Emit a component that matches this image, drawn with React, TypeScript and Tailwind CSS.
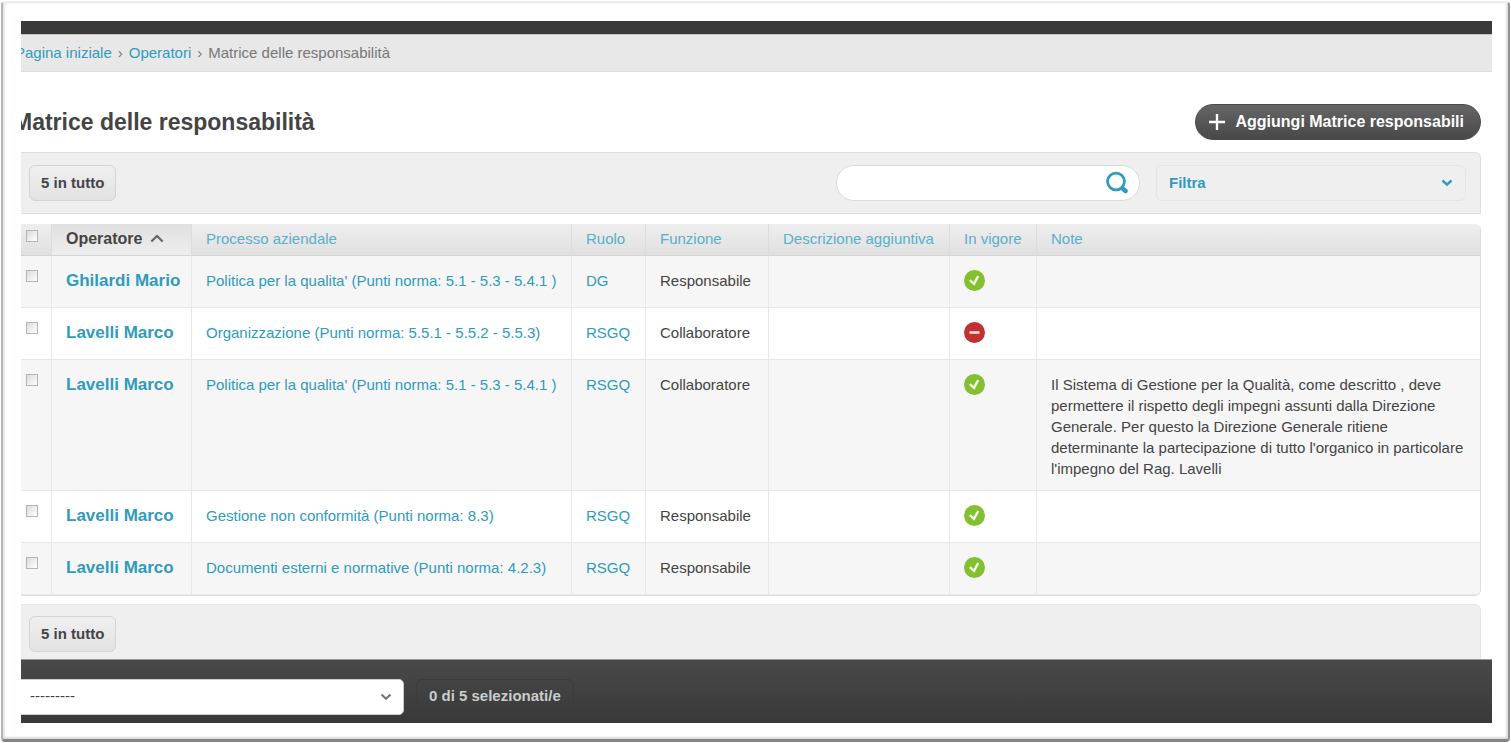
import { clsx } from "clsx";

type Row = {
  operator: string;
  process: string;
  role: string;
  job: string;
  active: boolean;
  note?: string;
};

const rows: Row[] = [
  {
    operator: "Ghilardi Mario",
    process: "Politica per la qualita' (Punti norma: 5.1 - 5.3 - 5.4.1 )",
    role: "DG",
    job: "Responsabile",
    active: true,
  },
  {
    operator: "Lavelli Marco",
    process: "Organizzazione (Punti norma: 5.5.1 - 5.5.2 - 5.5.3)",
    role: "RSGQ",
    job: "Collaboratore",
    active: false,
  },
  {
    operator: "Lavelli Marco",
    process: "Politica per la qualita' (Punti norma: 5.1 - 5.3 - 5.4.1 )",
    role: "RSGQ",
    job: "Collaboratore",
    active: true,
    note: "Il Sistema di Gestione per la Qualità, come descritto , deve permettere il rispetto degli impegni assunti dalla Direzione Generale. Per questo la Direzione Generale ritiene determinante la partecipazione di tutto l'organico in particolare l'impegno del Rag. Lavelli",
  },
  {
    operator: "Lavelli Marco",
    process: "Gestione non conformità (Punti norma: 8.3)",
    role: "RSGQ",
    job: "Responsabile",
    active: true,
  },
  {
    operator: "Lavelli Marco",
    process: "Documenti esterni e normative (Punti norma: 4.2.3)",
    role: "RSGQ",
    job: "Responsabile",
    active: true,
  },
];

const columns = [
  "Processo aziendale",
  "Ruolo",
  "Funzione",
  "Descrizione aggiuntiva",
  "In vigore",
  "Note",
];

const StatusIcon = ({ active }: { active: boolean }) => (
  <svg
    viewBox="0 0 22 22"
    className="block h-[22px] w-[22px]"
    role="img"
    aria-label={active ? "Sì" : "No"}
  >
    <circle cx="10.5" cy="10.5" r="10.5" fill={active ? "#83c02f" : "#c23030"} />
    {active ? (
      <path
        d="M5.8 10.2l4.2 3.6 4.2-7.8"
        fill="none"
        stroke="#f4faea"
        strokeWidth="2.4"
      />
    ) : (
      <path d="M5.5 10.5h10" stroke="#f6dcdc" strokeWidth="2.6" />
    )}
  </svg>
);

const Checkbox = ({ label }: { label: string }) => (
  <input
    type="checkbox"
    aria-label={label}
    className="block h-3 w-3 appearance-none border border-[#b4b4b4] bg-linear-to-br from-[#dcdcdc] to-white checked:bg-[#309bbf]"
  />
);

const Total = () => (
  <div className="flex h-9 items-center rounded-md border border-[#d4d4d4] bg-linear-to-b from-[#f0f0f0] to-[#e2e2e2] px-[11px] text-[15px] font-bold text-[#444]">
    5 in tutto
  </div>
);

const cell =
  "h-[52px] border-b border-r border-[#e8e8e8] px-3.5 pt-[14px] pb-[11px] align-top last:border-r-0";
const head =
  "h-8 border-b border-r border-b-[#d4d4d4] border-r-[#dcdcdc] px-3.5 pb-0.5 text-left last:border-r-0";
const link = "text-[#309bbf] hover:underline";

export default function App() {
  return (
    <div className="min-h-[743px] bg-white p-px font-['Liberation_Sans',Arial,sans-serif] text-[#444]">
      <div className="min-h-[741px] rounded-sm border-t-2 border-r-2 border-b-[3px] border-l-2 border-t-[#ececec] border-r-[#929292] border-b-[#858585] border-l-[#b0b5b5] pt-[18px] pr-4 pb-4 pl-[18px] shadow-[inset_-2px_-2px_2px_#dcdcdc,inset_2px_0_2px_#e6e6e6]">
        <div className="overflow-hidden">
          <div className="h-[13px] bg-[#3a3a3a]" />
          <nav
            aria-label="Percorso"
            className="flex h-[38px] items-center border-y border-t-[#c4c4c4] border-b-[#dedede] bg-[#e8e8e8] text-[15px] text-[#777]"
          >
            <a href="#" className={clsx(link, "-ml-1.5")}>
              Pagina iniziale
            </a>
            <span className="px-1.5">›</span>
            <a href="#" className={link}>
              Operatori
            </a>
            <span className="px-1.5">›</span>
            <span>Matrice delle responsabilità</span>
          </nav>

          <main className="pr-[11px]">
            <div className="flex h-20 items-center justify-between pt-5">
              <h1 className="-ml-2 text-[23px] font-bold">
                Matrice delle responsabilità
              </h1>
              <button className="flex h-9 items-center rounded-full border border-[#4a4a4a] bg-linear-to-b from-[#666] to-[#484848] pr-4 pl-3 text-base font-bold text-white">
                <svg viewBox="0 0 18 18" className="mr-2.5 h-[18px] w-[18px]">
                  <path d="M9 1v16M1 9h16" stroke="#fff" strokeWidth="2.4" />
                </svg>
                Aggiungi Matrice responsabili
              </button>
            </div>

            <div className="flex h-[62px] items-center justify-between rounded-tr-md border border-l-0 border-[#dedede] bg-[#efefef] pr-3.5 pl-2">
              <Total />
              <div className="flex gap-4">
                <form
                  role="search"
                  className="flex h-9 w-[304px] items-center rounded-full border border-[#dcdcdc] bg-white pr-2.5 pl-4"
                >
                  <input
                    type="text"
                    aria-label="Cerca"
                    className="min-w-0 flex-1 text-[15px] outline-none"
                  />
                  <button type="button" aria-label="Cerca">
                    <svg
                      viewBox="0 0 24 24"
                      className="block h-6 w-6"
                      fill="none"
                      stroke="#309bbf"
                    >
                      <circle cx="11" cy="10.5" r="8.4" strokeWidth="2.8" />
                      <path
                        d="M17.6 17.4l3 2.6"
                        strokeWidth="4.6"
                        strokeLinecap="round"
                      />
                    </svg>
                  </button>
                </form>
                <button className="flex h-9 w-[310px] items-center justify-between rounded-md border border-[#e5e5e5] px-3 text-[15px] font-bold text-[#309bbf]">
                  Filtra
                  <svg viewBox="0 0 12 8" className="h-2 w-3">
                    <path
                      d="M1.5 1.5L6 5.7l4.5-4.2"
                      fill="none"
                      stroke="#309bbf"
                      strokeWidth="2.4"
                    />
                  </svg>
                </button>
              </div>
            </div>

            <div className="mt-2.5 overflow-hidden rounded-r-md border-r border-b border-[#dedede]">
              <table className="w-full table-fixed border-separate border-spacing-0 text-[15px] leading-[21px]">
                <colgroup>
                  <col className="w-[31px]" />
                  <col className="w-[140px]" />
                  <col className="w-[380px]" />
                  <col className="w-[74px]" />
                  <col className="w-[123px]" />
                  <col className="w-[181px]" />
                  <col className="w-[87px]" />
                  <col />
                </colgroup>
                <thead>
                  <tr className="bg-linear-to-b from-[#eee] to-[#e0e0e0]">
                    <th className={clsx(head, "pt-1.5 pl-[5px] align-top")}>
                      <Checkbox label="Seleziona tutto" />
                    </th>
                    <th
                      className={clsx(
                        head,
                        "bg-linear-to-b from-[#e0e0e0] to-[#eee]",
                      )}
                    >
                      <a
                        href="#"
                        className="flex items-center gap-2 text-base leading-[21px] font-bold"
                      >
                        Operatore
                        <svg viewBox="0 0 14 9" className="h-[9px] w-3.5">
                          <path
                            d="M1.3 7.5L7 2l5.7 5.5"
                            fill="none"
                            stroke="#666"
                            strokeWidth="2.2"
                          />
                        </svg>
                      </a>
                    </th>
                    {columns.map((name) => (
                      <th key={name} className={clsx(head, "font-normal")}>
                        <a href="#" className="text-[#59afcc]">
                          {name}
                        </a>
                      </th>
                    ))}
                  </tr>
                </thead>
                <tbody>
                  {rows.map((row, i) => (
                    <tr key={i} className="odd:bg-[#f6f6f6]">
                      <td className={clsx(cell, "pl-[5px]")}>
                        <Checkbox label={`Seleziona ${row.operator}`} />
                      </td>
                      <td
                        className={clsx(
                          cell,
                          "text-[17px] leading-[21px] font-bold whitespace-nowrap",
                        )}
                      >
                        <a href="#" className={link}>
                          {row.operator}
                        </a>
                      </td>
                      <td className={cell}>
                        <a href="#" className={link}>
                          {row.process}
                        </a>
                      </td>
                      <td className={cell}>
                        <a href="#" className={link}>
                          {row.role}
                        </a>
                      </td>
                      <td className={cell}>{row.job}</td>
                      <td className={cell} />
                      <td className={cell}>
                        <StatusIcon active={row.active} />
                      </td>
                      <td className={cell}>{row.note}</td>
                    </tr>
                  ))}
                </tbody>
              </table>
            </div>

            <div className="mt-2 flex h-[55px] items-center rounded-tr-md border-t border-r border-[#e5e5e5] bg-[#efefef] pt-1 pl-2">
              <Total />
            </div>
          </main>

          <footer className="flex h-16 items-center gap-3 border-t border-[#999] bg-linear-to-b from-[#494949] to-[#393939] pt-2.5">
            <div className="relative -ml-1 w-[387px]">
              <select
                aria-label="Azione"
                className="block h-9 w-full appearance-none rounded-[5px] border border-[#ccc] bg-white pl-3 text-[15px] text-[#444]"
              >
                <option>---------</option>
              </select>
              <svg
                viewBox="0 0 12 8"
                className="pointer-events-none absolute top-3.5 right-3 h-2 w-3"
              >
                <path
                  d="M1.5 1.5L6 5.7l4.5-4.2"
                  fill="none"
                  stroke="#777"
                  strokeWidth="2.2"
                />
              </svg>
            </div>
            <span className="flex h-9 items-center rounded-md border border-[#3c3c3c] px-3 text-[15px] font-bold text-[#ccc]">
              0 di 5 selezionati/e
            </span>
          </footer>
        </div>
      </div>
    </div>
  );
}
